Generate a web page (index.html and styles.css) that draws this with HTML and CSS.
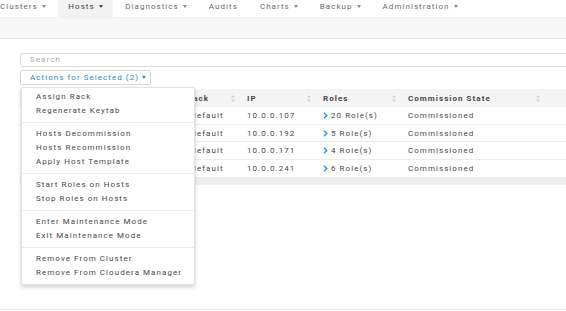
FILE: index.html
```html
<!DOCTYPE html>
<html>
<head>
<meta charset="utf-8">
<link rel="stylesheet" href="styles.css">
</head>
<body>
<div class="page">
  <nav class="nav">
    <div class="nav-item">Clusters <span class="caret"></span></div>
    <div class="nav-item active">Hosts <span class="caret dark"></span></div>
    <div class="nav-item">Diagnostics <span class="caret"></span></div>
    <div class="nav-item">Audits</div>
    <div class="nav-item">Charts <span class="caret"></span></div>
    <div class="nav-item">Backup <span class="caret"></span></div>
    <div class="nav-item">Administration <span class="caret"></span></div>
  </nav>
  <div class="subbar"></div>
  <main class="main">
    <div class="search">Search</div>
    <div class="actions-row">
      <div class="actions-btn">Actions for Selected (2) <span class="caret blue"></span></div>
    </div>
    <div class="table-wrap">
      <div class="table">
        <div class="row head">
          <div class="cell c0"></div>
          <div class="cell">Rack<svg class="sort" viewBox="0 0 4 7"><path d="M2 0L4 2.5H0Z M2 7L4 4.5H0Z"/></svg></div>
          <div class="cell">IP<svg class="sort" viewBox="0 0 4 7"><path d="M2 0L4 2.5H0Z M2 7L4 4.5H0Z"/></svg></div>
          <div class="cell">Roles<svg class="sort" viewBox="0 0 4 7"><path d="M2 0L4 2.5H0Z M2 7L4 4.5H0Z"/></svg></div>
          <div class="cell">Commission State<svg class="sort" viewBox="0 0 4 7"><path d="M2 0L4 2.5H0Z M2 7L4 4.5H0Z"/></svg></div>
          <div class="cell"></div>
        </div>
        <div class="row">
          <div class="cell c0"></div>
          <div class="cell">/default</div>
          <div class="cell">10.0.0.107</div>
          <div class="cell"><svg class="chev" viewBox="0 0 5 7"><path d="M1 0.8L3.8 3.5L1 6.2"/></svg>20 Role(s)</div>
          <div class="cell">Commissioned</div>
          <div class="cell"></div>
        </div>
        <div class="row">
          <div class="cell c0"></div>
          <div class="cell">/default</div>
          <div class="cell">10.0.0.192</div>
          <div class="cell"><svg class="chev" viewBox="0 0 5 7"><path d="M1 0.8L3.8 3.5L1 6.2"/></svg>5 Role(s)</div>
          <div class="cell">Commissioned</div>
          <div class="cell"></div>
        </div>
        <div class="row">
          <div class="cell c0"></div>
          <div class="cell">/default</div>
          <div class="cell">10.0.0.171</div>
          <div class="cell"><svg class="chev" viewBox="0 0 5 7"><path d="M1 0.8L3.8 3.5L1 6.2"/></svg>4 Role(s)</div>
          <div class="cell">Commissioned</div>
          <div class="cell"></div>
        </div>
        <div class="row">
          <div class="cell c0"></div>
          <div class="cell">/default</div>
          <div class="cell">10.0.0.241</div>
          <div class="cell"><svg class="chev" viewBox="0 0 5 7"><path d="M1 0.8L3.8 3.5L1 6.2"/></svg>6 Role(s)</div>
          <div class="cell">Commissioned</div>
          <div class="cell"></div>
        </div>
        <div class="table-foot"></div>
      </div>
      <ul class="menu">
        <li>Assign Rack</li>
        <li>Regenerate Keytab</li>
        <li class="divider"></li>
        <li>Hosts Decommission</li>
        <li>Hosts Recommission</li>
        <li>Apply Host Template</li>
        <li class="divider"></li>
        <li>Start Roles on Hosts</li>
        <li>Stop Roles on Hosts</li>
        <li class="divider"></li>
        <li>Enter Maintenance Mode</li>
        <li>Exit Maintenance Mode</li>
        <li class="divider"></li>
        <li>Remove From Cluster</li>
        <li>Remove From Cloudera Manager</li>
      </ul>
    </div>
  </main>
  <div class="footer-line"></div>
</div>
</body>
</html>
```

FILE: styles.css
```css
* { box-sizing: border-box; }
html, body { margin: 0; padding: 0; }
body {
  width: 566px;
  height: 311px;
  overflow: hidden;
  background: #fff;
  font-family: Roboto, "Liberation Sans", sans-serif;
  font-size: 8px;
  letter-spacing: 1.05px;
  color: #474747;
}
.page {
  height: 311px;
  display: flex;
  flex-direction: column;
}
.nav {
  height: 17px;
  display: flex;
  align-items: stretch;
  margin-left: -10px;
  color: #6a6a6a;
}
.nav-item {
  display: flex;
  align-items: center;
  gap: 2px;
  padding: 0 10px 4px;
  margin-right: 2px;
  white-space: nowrap;
}
.nav-item.active {
  background: #f2f2f2;
  color: #444;
  padding-left: 10.5px;
  padding-right: 10.5px;
}
.caret {
  display: inline-block;
  width: 0;
  height: 0;
  border-left: 2.5px solid transparent;
  border-right: 2.5px solid transparent;
  border-top: 3px solid #888;
  margin-left: 2px;
}
.caret.dark { border-top-color: #444; }
.caret.blue { border-top-color: #2a86c8; }
.subbar {
  height: 22px;
  background: #f7f7f7;
  border-top: 1px solid #f0f0f0;
  border-bottom: 1px solid #e6e6e6;
}
.main {
  flex: 1;
  padding-left: 20px;
  padding-top: 14px;
}
.search {
  width: 560px;
  height: 14px;
  border: 1px solid #dcdcdc;
  border-radius: 2px;
  padding-left: 9px;
  line-height: 12px;
  color: #aaa;
}
.actions-row {
  margin-top: 3px;
  display: flex;
}
.actions-btn {
  height: 15px;
  width: 131px;
  border: 1px solid #d8d8d8;
  border-radius: 2px;
  padding-left: 9px;
  display: flex;
  align-items: center;
  color: #2a86c8;
  white-space: nowrap;
}
.actions-btn .caret { margin-left: 3px; }
.table-wrap {
  position: relative;
  margin-top: 4px;
}
.table {
  width: 546px;
}
.row {
  display: grid;
  grid-template-columns: 160px 60px 76px 85px 144px 1fr;
  height: 17.7px;
  border-bottom: 1px solid #ececec;
}
.row.head {
  height: 18px;
  background: #f4f4f4;
  font-weight: bold;
  border-bottom: none;
}
.cell {
  display: flex;
  align-items: center;
  justify-content: flex-start;
  padding-left: 7px;
  white-space: nowrap;
  overflow: hidden;
}
.head .cell {
  justify-content: space-between;
  padding-right: 5px;
}
.sort {
  width: 4px;
  height: 7px;
  fill: #d0d0d0;
  flex: none;
}
.chev {
  width: 5px;
  height: 7px;
  margin-right: 3px;
  fill: none;
  stroke: #2a96d8;
  stroke-width: 1.4;
  flex: none;
}
.table-foot {
  height: 7px;
  background: #efefef;
}
.menu {
  position: absolute;
  top: -2px;
  left: 1px;
  width: 174px;
  margin: 0;
  padding: 2px 0 4px;
  list-style: none;
  background: #fff;
  border: 1px solid #e3e3e3;
  border-radius: 2px;
  box-shadow: 0 2px 4px rgba(0,0,0,0.2);
}
.menu li {
  height: 14px;
  line-height: 14px;
  padding-left: 14px;
  white-space: nowrap;
  color: #474747;
}
.menu li.divider {
  height: 1px;
  background: #ebebeb;
  margin: 4px 0;
}
.footer-line {
  height: 2px;
  border-top: 1px solid #eaeaea;
}
```
